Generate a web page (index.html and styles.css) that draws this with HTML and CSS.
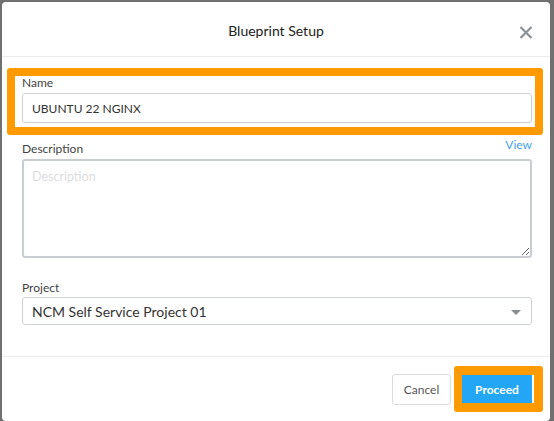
FILE: index.html
```html
<!DOCTYPE html>
<html>
<head>
<meta charset="utf-8">
<link rel="stylesheet" href="styles.css">
</head>
<body>
<div class="modal">
  <div class="header">
    <div class="title">Blueprint Setup</div>
    <svg class="close" width="14" height="13" viewBox="0 0 14 13"><path d="M1.5 1 L12.5 12 M12.5 1 L1.5 12" stroke="#8d9297" stroke-width="2.2" stroke-linecap="butt"/></svg>
  </div>
  <div class="body">
    <div class="name-group">
      <div class="label name-label">Name</div>
      <input class="input" type="text" value="UBUNTU 22 NGINX">
    </div>
    <div class="desc-row">
      <div class="label">Description</div>
      <a class="view">View</a>
    </div>
    <textarea class="textarea" placeholder="Description"></textarea>
    <div class="label project-label">Project</div>
    <div class="select">
      <span>NCM Self Service Project 01</span>
      <svg class="caret" width="10" height="5" viewBox="0 0 10 5"><path d="M0 0 L10 0 L5 5 Z" fill="#8a8d90"/></svg>
    </div>
  </div>
  <div class="footer">
    <button class="btn cancel">Cancel</button>
    <div class="highlight-btn">
      <button class="btn proceed">Proceed</button>
    </div>
  </div>
</div>
</body>
</html>
```
FILE: styles.css
```css
html, body {
  margin: 0;
  padding: 0;
  height: 100%;
  overflow: hidden;
}
body {
  background: #707070;
  font-family: Lato, "Liberation Sans", sans-serif;
  padding: 2px 4px 0 2px;
  box-sizing: border-box;
}
.modal {
  background: #fff;
  border-radius: 4px;
  height: 419px;
  display: flex;
  flex-direction: column;
}
.header {
  height: 54px;
  border-bottom: 1px solid #ececec;
  display: flex;
  align-items: center;
  justify-content: center;
  position: relative;
}
.title {
  font-size: 14px;
  color: #222;
  padding-top: 2px;
}
.close {
  position: absolute;
  right: 17px;
  top: 24px;
}
.body {
  padding: 11px 18px 31px 20px;
  display: flex;
  flex-direction: column;
  border-bottom: 1px solid #ececec;
}
.label {
  font-size: 12px;
  line-height: 15px;
  color: #444;
}
.name-group {
  border: 8px solid #ff9a00;
  border-radius: 3px;
  margin: 0 -11px 0 -15px;
  padding: 0 3px 4px 7px;
  display: flex;
  flex-direction: column;
}
.name-label {
  line-height: 13px;
  margin-bottom: 4px;
}
.input {
  height: 30px;
  box-sizing: border-box;
  border: 1px solid #cfd2d5;
  border-radius: 3px;
  padding: 0 9px;
  font-family: Lato, "Liberation Sans", sans-serif;
  font-size: 12px;
  color: #333;
  outline: none;
  margin: 0;
}
.desc-row {
  display: flex;
  justify-content: space-between;
  align-items: flex-start;
  margin-top: 6px;
  margin-bottom: 3px;
}
.view {
  font-size: 12px;
  line-height: 15px;
  color: #43a3ea;
  margin-top: -4px;
}
.textarea {
  height: 99px;
  box-sizing: border-box;
  border: 2px solid #c9cdd1;
  border-radius: 3px;
  padding: 8px 8px;
  font-family: Lato, "Liberation Sans", sans-serif;
  font-size: 12.5px;
  color: #333;
  outline: none;
  margin: 0;
  resize: vertical;
  display: block;
}
.textarea::placeholder {
  color: #dcdde0;
}
.project-label {
  margin-top: 22px;
  margin-bottom: 2px;
}
.select {
  height: 28px;
  box-sizing: border-box;
  border: 1px solid #cfd2d5;
  border-radius: 3px;
  padding: 0 10px 0 9px;
  display: flex;
  align-items: center;
  justify-content: space-between;
  font-size: 14px;
  color: #333;
}
.caret {
  margin-top: 2px;
}
.footer {
  display: flex;
  justify-content: flex-end;
  align-items: center;
  gap: 3px;
  padding: 9px 7px 0 0;
}
.btn {
  font-family: Lato, "Liberation Sans", sans-serif;
  font-size: 12px;
  border-radius: 3px;
  cursor: pointer;
  margin: 0;
}
.cancel {
  width: 59px;
  height: 31px;
  background: #fff;
  border: 1px solid #dadcde;
  color: #555;
}
.highlight-btn {
  border: 8px solid #ff9a00;
  border-width: 9px 9px 9px 8px;
  border-radius: 3px;
  background: #fff;
  padding-right: 2px;
  display: flex;
}
.proceed {
  width: 70px;
  height: 28px;
  border: none;
  border-radius: 0;
  background: #22a6f5;
  color: #fff;
  font-weight: bold;
}
```
